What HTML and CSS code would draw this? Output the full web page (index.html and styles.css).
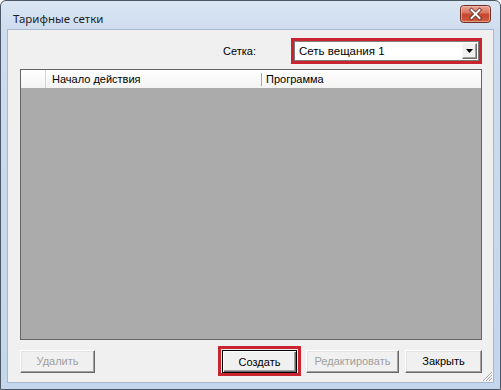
FILE: index.html
```html
<!DOCTYPE html>
<html lang="ru">
<head>
    <meta charset="UTF-8">
    <title>Тарифные сетки</title>
    <link rel="stylesheet" href="styles.css">
</head>
<body>
    <div class="window">
        <div class="titlebar">
            <span class="title">Тарифные сетки</span>
            <span class="close-btn">
                <svg width="31" height="18" viewBox="0 0 31 18">
                    <defs>
                        <linearGradient id="closeFill" x1="0" y1="0" x2="0" y2="1">
                            <stop offset="0" stop-color="#eba796"/>
                            <stop offset="0.45" stop-color="#d9735f"/>
                            <stop offset="0.5" stop-color="#c4452e"/>
                            <stop offset="1" stop-color="#cf5d3c"/>
                        </linearGradient>
                    </defs>
                    <rect x="0.5" y="0.5" width="30" height="17" rx="3" fill="url(#closeFill)" stroke="#6e2e26"/>
                    <rect x="1.5" y="1.5" width="28" height="15" rx="2" fill="none" stroke="#f2c6bc" stroke-opacity="0.6"/>
                    <path d="M11.5 5 L19.5 13 M19.5 5 L11.5 13" stroke="#5a2a22" stroke-width="3.6" stroke-linecap="square"/>
                    <path d="M11.5 5 L19.5 13 M19.5 5 L11.5 13" stroke="#ffffff" stroke-width="2" stroke-linecap="square"/>
                </svg>
            </span>
        </div>
        <div class="client">
            <div class="filter-row">
                <span class="filter-label">Сетка:</span>
                <div class="highlight combo-highlight">
                    <div class="combo">
                        <span class="combo-text">Сеть вещания 1</span>
                        <span class="combo-arrow">
                            <svg width="7" height="4" viewBox="0 0 7 4"><path d="M0 0 H7 L3.5 4 Z" fill="#000"/></svg>
                        </span>
                    </div>
                </div>
            </div>
            <div class="grid">
                <div class="grid-header">
                    <div class="row-head"></div>
                    <div class="col col-start">Начало действия</div>
                    <div class="col col-program">Программа</div>
                </div>
                <div class="grid-body"></div>
            </div>
            <div class="button-row">
                <button class="btn" disabled>Удалить</button>
                <div class="spacer"></div>
                <div class="highlight btn-highlight">
                    <button class="btn btn-default">Создать</button>
                </div>
                <button class="btn btn-wide" disabled>Редактировать</button>
                <button class="btn btn-close">Закрыть</button>
            </div>
            <svg class="grip" width="11" height="11" viewBox="0 0 11 11">
                <path d="M10 1 L1 10 M10 4 L4 10 M10 7 L7 10" stroke="#a7a7a7" stroke-width="1"/>
                <path d="M11 1 L2 10 M11 4 L5 10 M11 7 L8 10" stroke="#ffffff" stroke-width="1"/>
            </svg>
        </div>
    </div>
</body>
</html>
```

FILE: styles.css
```css
body {
    margin: 0;
    padding: 0;
    background-color: #ffffff;
    font-family: 'Liberation Sans', Arial, sans-serif;
    font-size: 11px;
    color: #000;
}
.window {
    width: 501px;
    height: 390px;
    box-sizing: border-box;
    border: 1px solid #4d5866;
    border-radius: 6px 6px 0 0;
    background: linear-gradient(to bottom, #dbe6f3 0px, #cddcee 30px, #c4d6ec 100%);
    padding: 0 6px 6px 6px;
    display: flex;
    flex-direction: column;
}
.titlebar {
    height: 28px;
    display: flex;
    align-items: center;
    justify-content: space-between;
    padding: 0 3px 0 6px;
}
.title {
    font-family: 'Noto Sans', 'Open Sans', sans-serif;
    font-size: 11.5px;
    color: #1e1e1e;
    margin-top: 6px;
}
.close-btn {
    display: flex;
    margin-top: -3px;
}
.client {
    position: relative;
    flex: 1;
    background-color: #f0f0f0;
    border: 1px solid #a5b8d0;
    padding: 8px 11px 0 12px;
    display: flex;
    flex-direction: column;
}
.filter-row {
    height: 26px;
    display: flex;
    align-items: center;
    justify-content: flex-end;
}
.filter-label {
    margin-right: 35px;
}
.highlight {
    border: 3px solid #c9242f;
    box-sizing: border-box;
}
.combo-highlight {
    width: 191px;
    height: 26px;
    display: flex;
}
.combo {
    flex: 1;
    background-color: #ffffff;
    border: 1px solid #7a7a7a;
    border-top-color: #828282;
    display: flex;
    align-items: center;
    padding-left: 4px;
}
.combo-text {
    flex: 1;
    font-size: 11.5px;
}
.combo-arrow {
    width: 15px;
    height: 16px;
    margin-right: 1px;
    box-sizing: border-box;
    background-color: #f0f0f0;
    border: 1px solid;
    border-color: #f8f8f8 #6d6d6d #6d6d6d #f8f8f8;
    box-shadow: inset -1px -1px #a0a0a0;
    display: flex;
    align-items: center;
    justify-content: center;
}
.grid {
    margin-top: 5px;
    height: 271px;
    box-sizing: border-box;
    border: 1px solid #646464;
    display: flex;
    flex-direction: column;
}
.grid-header {
    height: 18px;
    display: flex;
    background: linear-gradient(to bottom, #ffffff, #f3f3f3);
}
.row-head {
    width: 24px;
    border-right: 1px solid #d5d5d5;
}
.col {
    position: relative;
    display: flex;
    align-items: center;
}
.col-start {
    width: 216px;
    padding-left: 6px;
    box-sizing: border-box;
}
.col-start::after {
    content: '';
    position: absolute;
    right: 0;
    top: 3px;
    bottom: 2px;
    width: 1px;
    background-color: #a8a8a8;
}
.col-program {
    padding-left: 4px;
}
.grid-body {
    flex: 1;
    background-color: #ababab;
}
.button-row {
    margin-top: 6px;
    display: flex;
    align-items: center;
}
.spacer {
    flex: 1;
}
.btn {
    width: 75px;
    height: 23px;
    box-sizing: border-box;
    font-family: 'Liberation Sans', Arial, sans-serif;
    font-size: 11px;
    color: #000;
    background-color: #f0f0f0;
    border: 1px solid;
    border-color: #ffffff #696969 #696969 #ffffff;
    box-shadow: inset -1px -1px #a0a0a0, inset 1px 1px #e3e3e3;
    padding: 0;
    margin: 0;
}
.btn:disabled {
    color: #a0a0a0;
}
.btn-wide {
    width: 93px;
    margin-left: 5px;
    margin-right: 6px;
}
.btn-close {
    width: 77px;
}
.btn-highlight {
    padding: 1px 1px 0 1px;
    height: 30px;
    display: flex;
    align-items: center;
}
.btn-default {
    height: 23px;
    border-color: #000;
    box-shadow: inset 1px 1px #ffffff, inset -1px -1px #696969, inset -2px -2px #a0a0a0;
}
.grip {
    position: absolute;
    right: 0;
    bottom: 0;
}
```
